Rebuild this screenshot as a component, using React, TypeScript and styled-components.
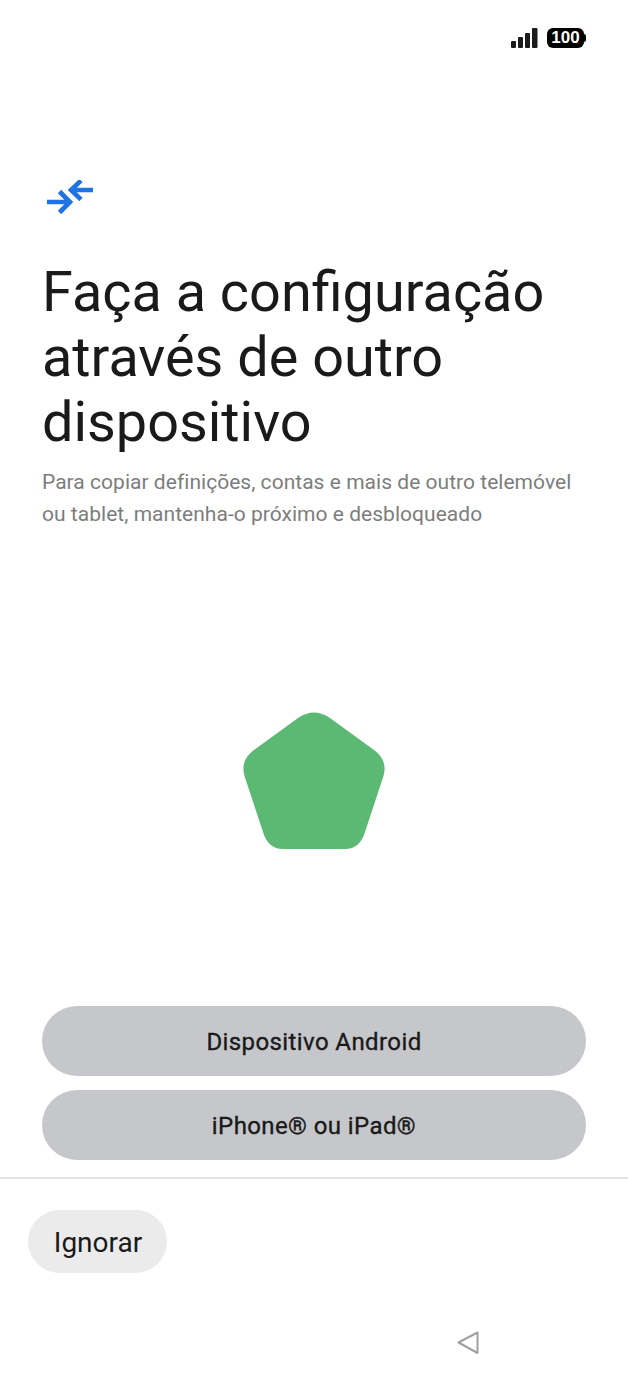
import React from "react";
import styled, { createGlobalStyle } from "styled-components";

const Global = createGlobalStyle`
  html, body { margin: 0; padding: 0; background: #fff; }
  * { box-sizing: border-box; }
`;
const Page = styled.div`
  width: 628px; height: 1381px; display: flex; flex-direction: column;
  font-family: Roboto, "Noto Sans", sans-serif; color: #1a1a1a; overflow: hidden; background: #fff;
`;
const StatusBar = styled.div`
  height: 28px; margin-top: 28px; padding-right: 41px; display: flex; justify-content: flex-end; gap: 9px; flex: none;
`;
const Battery = styled.div`
  width: 40px; height: 20px; display: flex; align-items: center; flex: none;
  &::after { content: ""; width: 2px; height: 8px; background: #000; border-radius: 0 2px 2px 0; flex: none; }
`;
const BatteryBody = styled.div`
  width: 37px; height: 20px; border-radius: 6px; background: #000; color: #fff;
  font: 700 17px/20px "Liberation Sans", Arial, sans-serif; text-align: center;
`;
const Content = styled.main`
  padding: 0 42px; margin-top: 124px; flex: none;
`;
const TopIcon = styled.svg`
  display: block; margin-left: 3px; width: 50px; height: 36px;
`;
const Title = styled.h1`
  margin: 44px 0 0; font-size: 55.8px; line-height: 65px; font-weight: 400; color: #1a1a1a;
`;
const Subtitle = styled.p`
  margin: 11px 0 0; font-size: 21px; line-height: 32px; letter-spacing: 0.03px; color: #7d7d7d;
`;
const Stage = styled.div`
  height: 476px; padding-top: 26px; display: flex; align-items: center; justify-content: center; flex: none;
`;
const Buttons = styled.div`
  padding: 0 42px; display: flex; flex-direction: column; gap: 14px; flex: none;
`;
const PrimaryButton = styled.button`
  height: 70px; border: 0; border-radius: 35px; background: #c6c7cb; color: #1a1a1a;
  font: 400 24px Roboto, sans-serif; letter-spacing: 0.4px; -webkit-text-stroke: 0.35px #1a1a1a; padding: 2px 0 0;
`;
const Divider = styled.hr`
  margin: 17px 0 0; border: 0; border-top: 2px solid #e4e4e4; flex: none;
`;
const Footer = styled.div`
  padding: 31px 28px 0; flex: none; display: flex;
`;
const SkipButton = styled.button`
  width: 139px; height: 63px; border: 0; border-radius: 32px; background: #ebebeb; color: #1a1a1a;
  font: 400 28px Roboto, sans-serif; padding: 2px 0 0 1px;
`;
const NavBar = styled.div`
  margin-top: 58px; padding-left: 457px; flex: none;
`;

export default function App() {
  return (
    <Page>
      <Global />
      <StatusBar>
        <svg width="27" height="20" viewBox="0 0 27 20" fill="#1c1c1c">
          <rect x="0" y="13" width="5" height="7" rx="1" />
          <rect x="7" y="9" width="5" height="11" rx="1" />
          <rect x="14" y="5" width="5" height="15" rx="1" />
          <rect x="21" y="0" width="5.5" height="20" rx="1" />
        </svg>
        <Battery>
          <BatteryBody>100</BatteryBody>
        </Battery>
      </StatusBar>
      <Content>
        <TopIcon viewBox="45 180 50 36" fill="none" stroke="#1f74e4" strokeWidth="4.6">
          <path d="M47 202H70M59.500 191.500L70 202L59.500 212.500" />
          <path d="M93 190H71M81 180.500L71 190L81 199.500" />
        </TopIcon>
        <Title>
          Faça a configuração
          <br />
          através de outro
          <br />
          dispositivo
        </Title>
        <Subtitle>
          Para copiar definições, contas e mais de outro telemóvel
          <br />
          ou tablet, mantenha-o próximo e desbloqueado
        </Subtitle>
      </Content>
      <Stage>
        <svg width="142" height="138" viewBox="243 712 142 138" fill="#5cb974">
          <path d="M298 718Q314 707 330 718L374 750Q388 760 383.500 776L365 832Q360 849 345 849L283 849Q268 849 263 832L244.500 776Q240 760 254 750Z" />
        </svg>
      </Stage>
      <Buttons>
        <PrimaryButton>Dispositivo Android</PrimaryButton>
        <PrimaryButton>iPhone® ou iPad®</PrimaryButton>
      </Buttons>
      <Divider />
      <Footer>
        <SkipButton>Ignorar</SkipButton>
      </Footer>
      <NavBar>
        <svg width="22" height="24" viewBox="0 0 22 24" fill="none" stroke="#a0a0a0" strokeWidth="2" strokeLinejoin="round">
          <path d="M1.500 11.500L20.500 1.500V22Z" />
        </svg>
      </NavBar>
    </Page>
  );
}
